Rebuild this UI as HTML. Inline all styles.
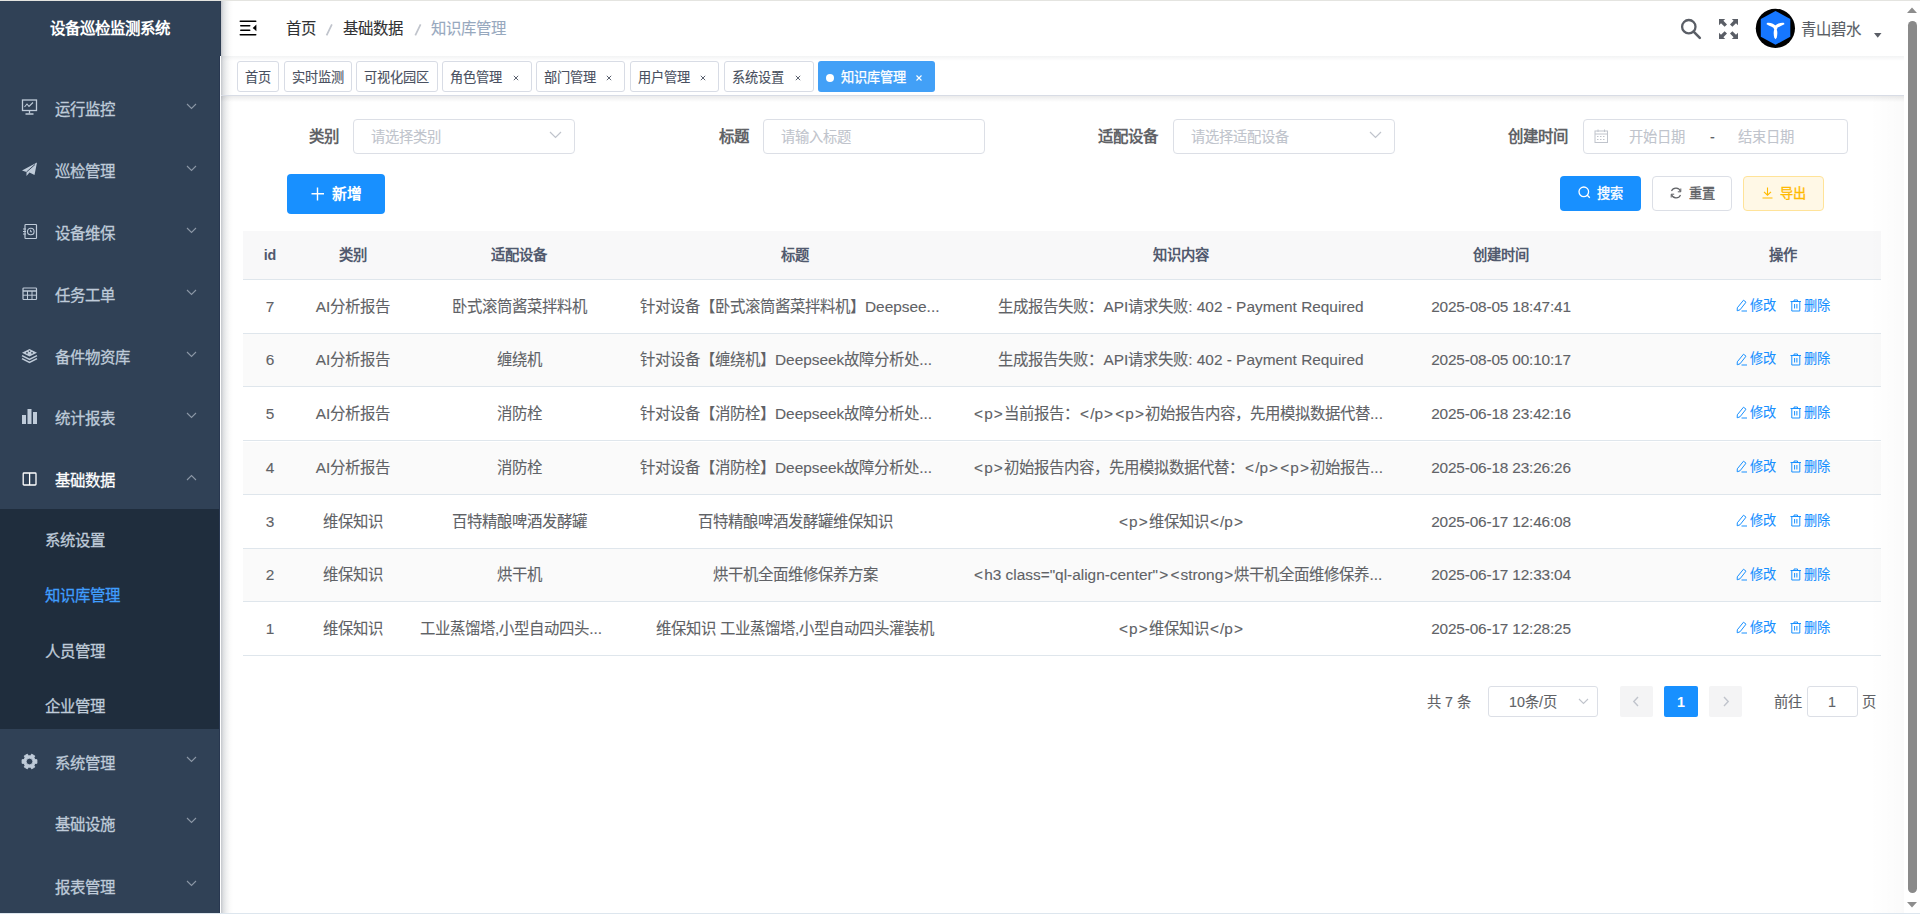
<!DOCTYPE html><html lang="zh-CN"><head><meta charset="utf-8"><style>
*{box-sizing:border-box;margin:0;padding:0}
html,body{width:1920px;height:914px;overflow:hidden;background:#fff;font-family:"Liberation Sans",sans-serif;position:relative}
.a{position:absolute;white-space:nowrap;line-height:20px}
span.a{-webkit-text-stroke-width:0.12px}
svg{display:block;position:absolute;overflow:visible}
.box{position:absolute}
</style></head><body>
<div class="box" style="left:0;top:0;width:1920px;height:1px;background:#e4e4e0"></div>
<div class="box" style="left:0;top:1px;width:220px;height:912px;background:#304156"></div>
<div class="box" style="left:0;top:509px;width:220px;height:220px;background:#1f2d3d"></div>
<div class="box" style="left:219px;top:56px;width:1px;height:857px;background:#283750"></div>
<div class="box" style="left:220px;top:1px;width:1px;height:55px;background:#2c3b50"></div>
<div class="box" style="left:221px;top:1px;width:12px;height:912px;background:linear-gradient(to right,#c4c7cc,#dfe1e3 20%,#eff0f1 45%,#fafafa 70%,rgba(255,255,255,0))"></div>
<span class="a" style="left:-190px;width:600px;text-align:center;top:18.8px;font-size:15.4px;color:#fff;font-weight:bold;-webkit-text-stroke-width:0;">设备巡检监测系统</span>
<span class="a" style="left:55px;top:100.0px;font-size:15.4px;color:#bfcbd9;font-weight:normal;-webkit-text-stroke-width:0.3px">运行监控</span>
<svg style="left:21px;top:99px" width="17" height="17" viewBox="0 0 17 17"><rect x="1.5" y="1" width="14" height="10.5" fill="none" stroke="#bfcbd9" stroke-width="1.3"/><polyline points="3.5,8 6,5 8,7.5 12,3.5" fill="none" stroke="#bfcbd9" stroke-width="1.1"/><line x1="8.5" y1="11.5" x2="8.5" y2="14.5" stroke="#bfcbd9" stroke-width="1.3"/><line x1="4.5" y1="15" x2="12.5" y2="15" stroke="#bfcbd9" stroke-width="1.5"/></svg>
<svg style="left:186px;top:103.0px" width="11" height="7" viewBox="0 0 11 7"><polyline points="1,1 5.5,5.5 10,1" fill="none" stroke="#8c97a6" stroke-width="1.1"/></svg>
<span class="a" style="left:55px;top:161.5px;font-size:15.4px;color:#bfcbd9;font-weight:normal;-webkit-text-stroke-width:0.3px">巡检管理</span>
<svg style="left:21px;top:161px" width="17" height="17" viewBox="0 0 17 17"><path d="M1 9.5 L16 1.5 L13.5 14 L8.5 11.5 L5.5 15 L5.5 11 Z" fill="#bfcbd9"/><path d="M5.5 11 L14 3.5" stroke="#304156" stroke-width="0.9"/></svg>
<svg style="left:186px;top:164.5px" width="11" height="7" viewBox="0 0 11 7"><polyline points="1,1 5.5,5.5 10,1" fill="none" stroke="#8c97a6" stroke-width="1.1"/></svg>
<span class="a" style="left:55px;top:223.5px;font-size:15.4px;color:#bfcbd9;font-weight:normal;-webkit-text-stroke-width:0.3px">设备维保</span>
<svg style="left:21px;top:223px" width="17" height="17" viewBox="0 0 17 17"><rect x="4" y="1.5" width="11.5" height="14" rx="0.8" fill="none" stroke="#bfcbd9" stroke-width="1.2"/><line x1="2" y1="6" x2="5" y2="6" stroke="#bfcbd9" stroke-width="1"/><line x1="2" y1="8.5" x2="5" y2="8.5" stroke="#bfcbd9" stroke-width="1"/><line x1="2" y1="11" x2="5" y2="11" stroke="#bfcbd9" stroke-width="1"/><circle cx="9.8" cy="8.5" r="3.3" fill="none" stroke="#bfcbd9" stroke-width="1.1"/><path d="M9.6 6.8 V8.8 H11" fill="none" stroke="#bfcbd9" stroke-width="1"/></svg>
<svg style="left:186px;top:226.5px" width="11" height="7" viewBox="0 0 11 7"><polyline points="1,1 5.5,5.5 10,1" fill="none" stroke="#8c97a6" stroke-width="1.1"/></svg>
<span class="a" style="left:55px;top:285.5px;font-size:15.4px;color:#bfcbd9;font-weight:normal;-webkit-text-stroke-width:0.3px">任务工单</span>
<svg style="left:22px;top:287px" width="16" height="14" viewBox="0 0 16 14"><rect x="1" y="1" width="13.5" height="11.5" rx="0.8" fill="none" stroke="#bfcbd9" stroke-width="1.2"/><line x1="1" y1="4" x2="14.5" y2="4" stroke="#bfcbd9" stroke-width="1.5"/><line x1="1" y1="8.2" x2="14.5" y2="8.2" stroke="#bfcbd9" stroke-width="1"/><line x1="5.5" y1="4" x2="5.5" y2="12.5" stroke="#bfcbd9" stroke-width="1"/><line x1="10" y1="4" x2="10" y2="12.5" stroke="#bfcbd9" stroke-width="1"/></svg>
<svg style="left:186px;top:288.5px" width="11" height="7" viewBox="0 0 11 7"><polyline points="1,1 5.5,5.5 10,1" fill="none" stroke="#8c97a6" stroke-width="1.1"/></svg>
<span class="a" style="left:55px;top:347.5px;font-size:15.4px;color:#bfcbd9;font-weight:normal;-webkit-text-stroke-width:0.3px">备件物资库</span>
<svg style="left:21px;top:347.5px" width="17" height="16" viewBox="0 0 17 16"><path d="M8.5 1 L16 4.8 L8.5 8.6 L1 4.8 Z" fill="#bfcbd9"/><path d="M1 7.6 L8.5 11.4 L16 7.6" fill="none" stroke="#bfcbd9" stroke-width="1.6"/><path d="M1 10.6 L8.5 14.4 L16 10.6" fill="none" stroke="#bfcbd9" stroke-width="1.6"/><circle cx="6" cy="4.8" r="0.9" fill="#304156"/><circle cx="11" cy="4.8" r="0.9" fill="#304156"/><circle cx="8.5" cy="3.2" r="0.8" fill="#304156"/></svg>
<svg style="left:186px;top:350.5px" width="11" height="7" viewBox="0 0 11 7"><polyline points="1,1 5.5,5.5 10,1" fill="none" stroke="#8c97a6" stroke-width="1.1"/></svg>
<span class="a" style="left:55px;top:408.5px;font-size:15.4px;color:#bfcbd9;font-weight:normal;-webkit-text-stroke-width:0.3px">统计报表</span>
<svg style="left:22px;top:409px" width="16" height="16" viewBox="0 0 16 16"><rect x="0" y="6" width="4" height="9" fill="#bfcbd9"/><rect x="5.5" y="0" width="4" height="15" fill="#bfcbd9"/><rect x="11" y="3" width="4" height="12" fill="#bfcbd9"/></svg>
<svg style="left:186px;top:411.5px" width="11" height="7" viewBox="0 0 11 7"><polyline points="1,1 5.5,5.5 10,1" fill="none" stroke="#8c97a6" stroke-width="1.1"/></svg>
<span class="a" style="left:55px;top:470.5px;font-size:15.4px;color:#fff;font-weight:normal;-webkit-text-stroke-width:0.3px">基础数据</span>
<svg style="left:22px;top:472px" width="15" height="14" viewBox="0 0 15 14"><rect x="1.2" y="1" width="12.8" height="12" rx="0.8" fill="none" stroke="#fff" stroke-width="1.3"/><line x1="7.6" y1="1" x2="7.6" y2="13" stroke="#fff" stroke-width="1.3"/></svg>
<svg style="left:186px;top:473.5px" width="11" height="7" viewBox="0 0 11 7"><polyline points="1,6 5.5,1.5 10,6" fill="none" stroke="#8c97a6" stroke-width="1.1"/></svg>
<span class="a" style="left:45px;top:530.5px;font-size:15.4px;color:#bfcbd9;font-weight:normal;-webkit-text-stroke-width:0.3px">系统设置</span>
<span class="a" style="left:45px;top:585.8px;font-size:15.4px;color:#409eff;font-weight:normal;-webkit-text-stroke-width:0.3px">知识库管理</span>
<span class="a" style="left:45px;top:642.0px;font-size:15.4px;color:#bfcbd9;font-weight:normal;-webkit-text-stroke-width:0.3px">人员管理</span>
<span class="a" style="left:45px;top:697.0px;font-size:15.4px;color:#bfcbd9;font-weight:normal;-webkit-text-stroke-width:0.3px">企业管理</span>
<span class="a" style="left:55px;top:753.8px;font-size:15.4px;color:#bfcbd9;font-weight:normal;-webkit-text-stroke-width:0.3px">系统管理</span>
<svg style="left:186px;top:755.8px" width="11" height="7" viewBox="0 0 11 7"><polyline points="1,1 5.5,5.5 10,1" fill="none" stroke="#8c97a6" stroke-width="1.1"/></svg>
<span class="a" style="left:55px;top:815.3px;font-size:15.4px;color:#bfcbd9;font-weight:normal;-webkit-text-stroke-width:0.3px">基础设施</span>
<svg style="left:186px;top:817.3px" width="11" height="7" viewBox="0 0 11 7"><polyline points="1,1 5.5,5.5 10,1" fill="none" stroke="#8c97a6" stroke-width="1.1"/></svg>
<span class="a" style="left:55px;top:877.5px;font-size:15.4px;color:#bfcbd9;font-weight:normal;-webkit-text-stroke-width:0.3px">报表管理</span>
<svg style="left:186px;top:879.5px" width="11" height="7" viewBox="0 0 11 7"><polyline points="1,1 5.5,5.5 10,1" fill="none" stroke="#8c97a6" stroke-width="1.1"/></svg>
<svg style="left:21px;top:753px" width="17" height="17" viewBox="0 0 17 17"><path fill="#bfcbd9" stroke="#bfcbd9" stroke-width="0.8" stroke-linejoin="round" fill-rule="evenodd" d="M14.04 10.52 L15.97 10.36 L15.97 6.64 L14.04 6.48 L13.02 4.71 L13.85 2.96 L10.62 1.10 L9.52 2.69 L7.48 2.69 L6.38 1.10 L3.15 2.96 L3.98 4.71 L2.96 6.48 L1.03 6.64 L1.03 10.36 L2.96 10.52 L3.98 12.29 L3.15 14.04 L6.38 15.90 L7.48 14.31 L9.52 14.31 L10.62 15.90 L13.85 14.04 L13.02 12.29 Z M8.5 5.2 A3.3 3.3 0 1 0 8.5 11.8 A3.3 3.3 0 1 0 8.5 5.2 Z"/></svg>
<svg style="left:239px;top:19px" width="19" height="18" viewBox="0 0 19 18"><rect x="0.5" y="1.5" width="17" height="1.6" rx="0.8"/><rect x="1" y="6" width="10.5" height="1.6" rx="0.8"/><rect x="1" y="10.5" width="10.5" height="1.6" rx="0.8"/><rect x="0.5" y="15" width="17" height="1.6" rx="0.8"/><path d="M17.4 5.6 L13.7 8.9 L17.4 12.2 Z"/></svg>
<span class="a" style="left:285.5px;top:19.3px;font-size:15.4px;color:#303133;font-weight:normal;">首页</span>
<svg style="left:0;top:0" width="1" height="1"><path d="M331.9 24.3 L326.6 35.3 M420.6 24.3 L415.3 35.3" stroke="#c0c4cc" stroke-width="1.7"/></svg>
<span class="a" style="left:342.5px;top:19.3px;font-size:15.4px;color:#303133;font-weight:normal;">基础数据</span>
<span class="a" style="left:431px;top:19.3px;font-size:15.4px;color:#97a8be;font-weight:normal;">知识库管理</span>
<svg style="left:1680px;top:18px" width="23" height="23" viewBox="0 0 23 23"><circle cx="8.8" cy="8.7" r="6.7" fill="none" stroke="#5a5e66" stroke-width="2.3"/><line x1="13.6" y1="13.6" x2="19.8" y2="19.8" stroke="#5a5e66" stroke-width="2.6" stroke-linecap="round"/></svg>
<svg style="left:1719px;top:19px" width="19" height="20" viewBox="0 0 19 20"><g fill="#5a5e66"><path d="M0 0 H6.2 L4.4 1.8 L8 5.4 L5.6 7.8 L2 4.2 L0 6.2 Z"/><path d="M19 0 H12.8 L14.6 1.8 L11 5.4 L13.4 7.8 L17 4.2 L19 6.2 Z"/><path d="M0 20 H6.2 L4.4 18.2 L8 14.6 L5.6 12.2 L2 15.8 L0 13.8 Z"/><path d="M19 20 H12.8 L14.6 18.2 L11 14.6 L13.4 12.2 L17 15.8 L19 13.8 Z"/></g></svg>
<svg style="left:1755px;top:8px" width="41" height="41" viewBox="0 0 41 41"><circle cx="20.4" cy="20.3" r="19.6" fill="#000"/><path d="M20.5 2.9 L35.3 11 L35.3 28.8 L20.5 36.8 L5.8 28.8 L5.8 11 Z" fill="#1677ff"/><g fill="#fff"><path d="M20.5 19 C18 22.5 18.6 26.5 19.3 29.8 L20.5 31.2 L21.7 29.8 C22.4 26.5 23 22.5 20.5 19 Z"/><path d="M21 20.6 C17.5 19.5 14.5 17.8 11.6 16.3 L11.9 14.9 C15.5 14.3 19 15.8 21.6 18.5 Z"/><path d="M20 20.6 C23.5 19.5 26.5 17.8 29.4 16.3 L29.1 14.9 C25.5 14.3 22 15.8 19.4 18.5 Z"/><circle cx="20.5" cy="19.8" r="2"/></g></svg>
<span class="a" style="left:1801px;top:19.7px;font-size:15.4px;color:#5a5e66;font-weight:normal;">青山碧水</span>
<svg style="left:1874px;top:33px" width="8" height="5" viewBox="0 0 8 5"><path d="M0 0 H7.5 L3.75 4.8 Z" fill="#5a5e66"/></svg>
<div class="box" style="left:221px;top:56px;width:1683px;height:5px;background:linear-gradient(rgba(0,21,41,.05),rgba(0,21,41,0))"></div>
<div class="box" style="left:221px;top:95px;width:1683px;height:1px;background:#d8dce5"></div>
<div class="box" style="left:221px;top:96px;width:1683px;height:6px;background:linear-gradient(rgba(0,0,0,.08),rgba(0,0,0,0))"></div>
<div class="box" style="left:237px;top:61px;width:42px;height:31px;border:1px solid #d8dce5;border-radius:3px;background:#fff"></div>
<span class="a" style="left:245px;top:67.5px;font-size:13.2px;color:#495060;font-weight:normal;">首页</span>
<div class="box" style="left:284px;top:61px;width:68px;height:31px;border:1px solid #d8dce5;border-radius:3px;background:#fff"></div>
<span class="a" style="left:292px;top:67.5px;font-size:13.2px;color:#495060;font-weight:normal;">实时监测</span>
<div class="box" style="left:356px;top:61px;width:82px;height:31px;border:1px solid #d8dce5;border-radius:3px;background:#fff"></div>
<span class="a" style="left:364px;top:67.5px;font-size:13.2px;color:#495060;font-weight:normal;">可视化园区</span>
<div class="box" style="left:442px;top:61px;width:90px;height:31px;border:1px solid #d8dce5;border-radius:3px;background:#fff"></div>
<span class="a" style="left:450px;top:67.5px;font-size:13.2px;color:#495060;font-weight:normal;">角色管理</span>
<svg style="left:512.5px;top:75px" width="6" height="6" viewBox="0 0 6 6"><path d="M0.8 0.8 L5.2 5.2 M5.2 0.8 L0.8 5.2" stroke="#495060" stroke-width="0.9"/></svg>
<div class="box" style="left:536px;top:61px;width:89px;height:31px;border:1px solid #d8dce5;border-radius:3px;background:#fff"></div>
<span class="a" style="left:544px;top:67.5px;font-size:13.2px;color:#495060;font-weight:normal;">部门管理</span>
<svg style="left:605.5px;top:75px" width="6" height="6" viewBox="0 0 6 6"><path d="M0.8 0.8 L5.2 5.2 M5.2 0.8 L0.8 5.2" stroke="#495060" stroke-width="0.9"/></svg>
<div class="box" style="left:630px;top:61px;width:89px;height:31px;border:1px solid #d8dce5;border-radius:3px;background:#fff"></div>
<span class="a" style="left:638px;top:67.5px;font-size:13.2px;color:#495060;font-weight:normal;">用户管理</span>
<svg style="left:699.5px;top:75px" width="6" height="6" viewBox="0 0 6 6"><path d="M0.8 0.8 L5.2 5.2 M5.2 0.8 L0.8 5.2" stroke="#495060" stroke-width="0.9"/></svg>
<div class="box" style="left:724px;top:61px;width:90px;height:31px;border:1px solid #d8dce5;border-radius:3px;background:#fff"></div>
<span class="a" style="left:732px;top:67.5px;font-size:13.2px;color:#495060;font-weight:normal;">系统设置</span>
<svg style="left:794.5px;top:75px" width="6" height="6" viewBox="0 0 6 6"><path d="M0.8 0.8 L5.2 5.2 M5.2 0.8 L0.8 5.2" stroke="#495060" stroke-width="0.9"/></svg>
<div class="box" style="left:818px;top:61px;width:117px;height:31px;background:#42a0f7;border-radius:3px"></div>
<div class="box" style="left:826px;top:73.5px;width:8px;height:8px;background:#fff;border-radius:50%"></div>
<span class="a" style="left:840.5px;top:67.5px;font-size:13.2px;color:#fff;font-weight:normal;-webkit-text-stroke-width:0.3px">知识库管理</span>
<svg style="left:915.5px;top:75px" width="6" height="6" viewBox="0 0 6 6"><path d="M0.5 0.5 L5.5 5.5 M5.5 0.5 L0.5 5.5" stroke="#fff" stroke-width="1.1"/></svg>
<span class="a" style="left:309px;top:127.0px;font-size:15.4px;color:#606266;font-weight:bold;-webkit-text-stroke-width:0;">类别</span>
<div class="box" style="left:353px;top:119px;width:222px;height:35px;border:1px solid #dcdfe6;border-radius:4px;background:#fff"></div><span class="a" style="left:371px;top:127.0px;font-size:14.3px;color:#c0c4cc;font-weight:normal;-webkit-text-stroke-width:0.1px">请选择类别</span><svg style="left:549px;top:131px" width="13" height="8" viewBox="0 0 13 8"><polyline points="1,1 6.5,6.5 12,1" fill="none" stroke="#c0c4cc" stroke-width="1.2"/></svg>
<span class="a" style="left:719px;top:127.0px;font-size:15.4px;color:#606266;font-weight:bold;-webkit-text-stroke-width:0;">标题</span>
<div class="box" style="left:763px;top:119px;width:222px;height:35px;border:1px solid #dcdfe6;border-radius:4px;background:#fff"></div><span class="a" style="left:781px;top:127.0px;font-size:14.3px;color:#c0c4cc;font-weight:normal;-webkit-text-stroke-width:0.1px">请输入标题</span>
<span class="a" style="left:1098px;top:127.0px;font-size:15.4px;color:#606266;font-weight:bold;-webkit-text-stroke-width:0;">适配设备</span>
<div class="box" style="left:1173px;top:119px;width:222px;height:35px;border:1px solid #dcdfe6;border-radius:4px;background:#fff"></div><span class="a" style="left:1191px;top:127.0px;font-size:14.3px;color:#c0c4cc;font-weight:normal;-webkit-text-stroke-width:0.1px">请选择适配设备</span><svg style="left:1369px;top:131px" width="13" height="8" viewBox="0 0 13 8"><polyline points="1,1 6.5,6.5 12,1" fill="none" stroke="#c0c4cc" stroke-width="1.2"/></svg>
<span class="a" style="left:1508px;top:127.0px;font-size:15.4px;color:#606266;font-weight:bold;-webkit-text-stroke-width:0;">创建时间</span>
<div class="box" style="left:1583px;top:119px;width:265px;height:35px;border:1px solid #dcdfe6;border-radius:4px;background:#fff"></div>
<svg style="left:1594px;top:129px" width="15" height="15" viewBox="0 0 15 15"><rect x="1" y="2" width="12.5" height="11.5" fill="none" stroke="#c0c4cc" stroke-width="1"/><line x1="1" y1="5" x2="13.5" y2="5" stroke="#c0c4cc" stroke-width="1"/><line x1="4" y1="0.5" x2="4" y2="3" stroke="#c0c4cc"/><line x1="10.5" y1="0.5" x2="10.5" y2="3" stroke="#c0c4cc"/><g fill="#c0c4cc"><rect x="3" y="7" width="1.5" height="1"/><rect x="6" y="7" width="1.5" height="1"/><rect x="9" y="7" width="1.5" height="1"/><rect x="3" y="10" width="1.5" height="1"/><rect x="6" y="10" width="1.5" height="1"/><rect x="9" y="10" width="1.5" height="1"/></g></svg>
<span class="a" style="left:1629px;top:127.0px;font-size:14.3px;color:#c0c4cc;font-weight:normal;-webkit-text-stroke-width:0.1px">开始日期</span>
<span class="a" style="left:1412.5px;width:600px;text-align:center;top:127.0px;font-size:14.3px;color:#606266;font-weight:normal;">-</span>
<span class="a" style="left:1738px;top:127.0px;font-size:14.3px;color:#c0c4cc;font-weight:normal;-webkit-text-stroke-width:0.1px">结束日期</span>
<div class="box" style="left:287px;top:174px;width:98px;height:40px;background:#1890ff;border-radius:4px"></div>
<svg style="left:311px;top:186.5px" width="14" height="14" viewBox="0 0 14 14"><path d="M6.5 0.5 V13.5 M0.5 6.8 H13" stroke="#fff" stroke-width="1.4"/></svg>
<span class="a" style="left:331.5px;top:184.0px;font-size:14.8px;color:#fff;font-weight:bold;-webkit-text-stroke-width:0;">新增</span>
<div class="box" style="left:1560px;top:176px;width:81px;height:35px;background:#1890ff;border-radius:4px"></div>
<svg style="left:1578px;top:186px" width="13" height="13" viewBox="0 0 13 13"><circle cx="5.8" cy="5.8" r="4.8" fill="none" stroke="#fff" stroke-width="1.3"/><line x1="9.3" y1="9.3" x2="11.8" y2="11.8" stroke="#fff" stroke-width="1.3"/></svg>
<span class="a" style="left:1597px;top:184.0px;font-size:13.2px;color:#fff;font-weight:normal;-webkit-text-stroke-width:0.4px">搜索</span>
<div class="box" style="left:1652px;top:176px;width:80px;height:35px;border:1px solid #dcdfe6;background:#fff;border-radius:4px"></div>
<svg style="left:1670px;top:187px" width="12" height="12" viewBox="0 0 12 12"><path d="M10.5 4.5 A4.8 4.8 0 0 0 1.5 4" fill="none" stroke="#606266" stroke-width="1.1"/><path d="M1.5 7.5 A4.8 4.8 0 0 0 10.5 8" fill="none" stroke="#606266" stroke-width="1.1"/><path d="M10.8 1.5 V4.8 H7.8" fill="none" stroke="#606266" stroke-width="1"/><path d="M1.2 10.5 V7.2 H4.2" fill="none" stroke="#606266" stroke-width="1"/></svg>
<span class="a" style="left:1689px;top:184.0px;font-size:13.2px;color:#606266;font-weight:normal;-webkit-text-stroke-width:0.35px">重置</span>
<div class="box" style="left:1743px;top:176px;width:81px;height:35px;border:1px solid #ffe399;background:#fff8e6;border-radius:4px"></div>
<svg style="left:1762px;top:187px" width="12" height="12" viewBox="0 0 12 12"><path d="M5.5 0.5 V8 M2 4.8 L5.5 8.2 L9 4.8 M0.5 11 H10.5" fill="none" stroke="#ffba00" stroke-width="1.1"/></svg>
<span class="a" style="left:1780px;top:184.0px;font-size:13.2px;color:#ffba00;font-weight:normal;-webkit-text-stroke-width:0.35px">导出</span>
<div class="box" style="left:243px;top:231px;width:1638px;height:48px;background:#f8f8f9"></div>
<div class="box" style="left:243px;top:334.2px;width:1638px;height:52.76px;background:#fafafa"></div>
<div class="box" style="left:243px;top:441.7px;width:1638px;height:52.76px;background:#fafafa"></div>
<div class="box" style="left:243px;top:549.2px;width:1638px;height:52.76px;background:#fafafa"></div>
<div class="box" style="left:243px;top:279px;width:1638px;height:1px;background:#dfe6ec"></div>
<div class="box" style="left:243px;top:333px;width:1638px;height:1px;background:#dfe6ec"></div>
<div class="box" style="left:243px;top:386px;width:1638px;height:1px;background:#dfe6ec"></div>
<div class="box" style="left:243px;top:440px;width:1638px;height:1px;background:#dfe6ec"></div>
<div class="box" style="left:243px;top:494px;width:1638px;height:1px;background:#dfe6ec"></div>
<div class="box" style="left:243px;top:548px;width:1638px;height:1px;background:#dfe6ec"></div>
<div class="box" style="left:243px;top:601px;width:1638px;height:1px;background:#dfe6ec"></div>
<div class="box" style="left:243px;top:655px;width:1638px;height:1px;background:#dfe6ec"></div>
<span class="a" style="left:-30px;width:600px;text-align:center;top:244.8px;font-size:14.3px;color:#515a6e;font-weight:bold;-webkit-text-stroke-width:0;">id</span>
<span class="a" style="left:53px;width:600px;text-align:center;top:244.8px;font-size:14.3px;color:#515a6e;font-weight:bold;-webkit-text-stroke-width:0;">类别</span>
<span class="a" style="left:219px;width:600px;text-align:center;top:244.8px;font-size:14.3px;color:#515a6e;font-weight:bold;-webkit-text-stroke-width:0;">适配设备</span>
<span class="a" style="left:495px;width:600px;text-align:center;top:244.8px;font-size:14.3px;color:#515a6e;font-weight:bold;-webkit-text-stroke-width:0;">标题</span>
<span class="a" style="left:881px;width:600px;text-align:center;top:244.8px;font-size:14.3px;color:#515a6e;font-weight:bold;-webkit-text-stroke-width:0;">知识内容</span>
<span class="a" style="left:1201px;width:600px;text-align:center;top:244.8px;font-size:14.3px;color:#515a6e;font-weight:bold;-webkit-text-stroke-width:0;">创建时间</span>
<span class="a" style="left:1483px;width:600px;text-align:center;top:244.8px;font-size:14.3px;color:#515a6e;font-weight:bold;-webkit-text-stroke-width:0;">操作</span>
<span class="a" style="left:-30px;width:600px;text-align:center;top:296.5px;font-size:15.4px;color:#606266;font-weight:normal;-webkit-text-stroke-width:0.1px;">7</span>
<span class="a" style="left:53px;width:600px;text-align:center;top:296.5px;font-size:15.4px;color:#606266;font-weight:normal;-webkit-text-stroke-width:0.1px;">AI分析报告</span>
<span class="a" style="left:219px;width:600px;text-align:center;top:296.5px;font-size:15.4px;color:#606266;font-weight:normal;-webkit-text-stroke-width:0.1px;">卧式滚筒酱菜拌料机</span>
<span class="a" style="left:640px;top:296.5px;font-size:15.4px;color:#606266;font-weight:normal;-webkit-text-stroke-width:0.1px;">针对设备【卧式滚筒酱菜拌料机】Deepsee...</span>
<span class="a" style="left:881px;width:600px;text-align:center;top:296.5px;font-size:15.4px;color:#606266;font-weight:normal;-webkit-text-stroke-width:0.1px;">生成报告失败：API请求失败: 402 - Payment Required</span>
<span class="a" style="left:1201px;width:600px;text-align:center;top:296.5px;font-size:15.4px;color:#606266;font-weight:normal;-webkit-text-stroke-width:0.1px;letter-spacing:-0.17px;">2025-08-05 18:47:41</span>
<svg style="left:1736px;top:298.7px" width="12" height="13" viewBox="0 0 12 13"><path d="M7.5 1.2 L10 3.2 L4 10.8 L1.2 11.8 L1.3 8.8 Z" fill="none" stroke="#1890ff" stroke-width="1"/><line x1="5.5" y1="12" x2="11" y2="12" stroke="#1890ff" stroke-width="1"/></svg>
<span class="a" style="left:1750px;top:295.7px;font-size:13.2px;color:#1890ff;font-weight:normal;">修改</span>
<svg style="left:1790px;top:298.7px" width="12" height="13" viewBox="0 0 12 13"><path d="M0.5 2.5 H11 M4 2.5 V1 H7.5 V2.5 M1.8 2.5 V12 H9.8 V2.5 M4.6 5 V9.5 M6.9 5 V9.5" fill="none" stroke="#1890ff" stroke-width="1"/></svg>
<span class="a" style="left:1804px;top:295.7px;font-size:13.2px;color:#1890ff;font-weight:normal;">删除</span>
<span class="a" style="left:-30px;width:600px;text-align:center;top:350.26px;font-size:15.4px;color:#606266;font-weight:normal;-webkit-text-stroke-width:0.1px;">6</span>
<span class="a" style="left:53px;width:600px;text-align:center;top:350.26px;font-size:15.4px;color:#606266;font-weight:normal;-webkit-text-stroke-width:0.1px;">AI分析报告</span>
<span class="a" style="left:219px;width:600px;text-align:center;top:350.26px;font-size:15.4px;color:#606266;font-weight:normal;-webkit-text-stroke-width:0.1px;">缠绕机</span>
<span class="a" style="left:640px;top:350.26px;font-size:15.4px;color:#606266;font-weight:normal;-webkit-text-stroke-width:0.1px;">针对设备【缠绕机】Deepseek故障分析处...</span>
<span class="a" style="left:881px;width:600px;text-align:center;top:350.26px;font-size:15.4px;color:#606266;font-weight:normal;-webkit-text-stroke-width:0.1px;">生成报告失败：API请求失败: 402 - Payment Required</span>
<span class="a" style="left:1201px;width:600px;text-align:center;top:350.26px;font-size:15.4px;color:#606266;font-weight:normal;-webkit-text-stroke-width:0.1px;letter-spacing:-0.17px;">2025-08-05 00:10:17</span>
<svg style="left:1736px;top:352.5px" width="12" height="13" viewBox="0 0 12 13"><path d="M7.5 1.2 L10 3.2 L4 10.8 L1.2 11.8 L1.3 8.8 Z" fill="none" stroke="#1890ff" stroke-width="1"/><line x1="5.5" y1="12" x2="11" y2="12" stroke="#1890ff" stroke-width="1"/></svg>
<span class="a" style="left:1750px;top:349.46px;font-size:13.2px;color:#1890ff;font-weight:normal;">修改</span>
<svg style="left:1790px;top:352.5px" width="12" height="13" viewBox="0 0 12 13"><path d="M0.5 2.5 H11 M4 2.5 V1 H7.5 V2.5 M1.8 2.5 V12 H9.8 V2.5 M4.6 5 V9.5 M6.9 5 V9.5" fill="none" stroke="#1890ff" stroke-width="1"/></svg>
<span class="a" style="left:1804px;top:349.46px;font-size:13.2px;color:#1890ff;font-weight:normal;">删除</span>
<span class="a" style="left:-30px;width:600px;text-align:center;top:404.02px;font-size:15.4px;color:#606266;font-weight:normal;-webkit-text-stroke-width:0.1px;">5</span>
<span class="a" style="left:53px;width:600px;text-align:center;top:404.02px;font-size:15.4px;color:#606266;font-weight:normal;-webkit-text-stroke-width:0.1px;">AI分析报告</span>
<span class="a" style="left:219px;width:600px;text-align:center;top:404.02px;font-size:15.4px;color:#606266;font-weight:normal;-webkit-text-stroke-width:0.1px;">消防栓</span>
<span class="a" style="left:640px;top:404.02px;font-size:15.4px;color:#606266;font-weight:normal;-webkit-text-stroke-width:0.1px;">针对设备【消防栓】Deepseek故障分析处...</span>
<span class="a" style="left:973px;top:404.02px;font-size:15.4px;color:#606266;font-weight:normal;-webkit-text-stroke-width:0.1px;"><span style="margin:0 1.1px">&lt;</span>p<span style="margin:0 1.1px">&gt;</span>当前报告：<span style="margin:0 1.1px">&lt;</span>/p<span style="margin:0 1.1px">&gt;</span><span style="margin:0 1.1px">&lt;</span>p<span style="margin:0 1.1px">&gt;</span>初始报告内容，先用模拟数据代替...</span>
<span class="a" style="left:1201px;width:600px;text-align:center;top:404.02px;font-size:15.4px;color:#606266;font-weight:normal;-webkit-text-stroke-width:0.1px;letter-spacing:-0.17px;">2025-06-18 23:42:16</span>
<svg style="left:1736px;top:406.2px" width="12" height="13" viewBox="0 0 12 13"><path d="M7.5 1.2 L10 3.2 L4 10.8 L1.2 11.8 L1.3 8.8 Z" fill="none" stroke="#1890ff" stroke-width="1"/><line x1="5.5" y1="12" x2="11" y2="12" stroke="#1890ff" stroke-width="1"/></svg>
<span class="a" style="left:1750px;top:403.21999999999997px;font-size:13.2px;color:#1890ff;font-weight:normal;">修改</span>
<svg style="left:1790px;top:406.2px" width="12" height="13" viewBox="0 0 12 13"><path d="M0.5 2.5 H11 M4 2.5 V1 H7.5 V2.5 M1.8 2.5 V12 H9.8 V2.5 M4.6 5 V9.5 M6.9 5 V9.5" fill="none" stroke="#1890ff" stroke-width="1"/></svg>
<span class="a" style="left:1804px;top:403.21999999999997px;font-size:13.2px;color:#1890ff;font-weight:normal;">删除</span>
<span class="a" style="left:-30px;width:600px;text-align:center;top:457.78px;font-size:15.4px;color:#606266;font-weight:normal;-webkit-text-stroke-width:0.1px;">4</span>
<span class="a" style="left:53px;width:600px;text-align:center;top:457.78px;font-size:15.4px;color:#606266;font-weight:normal;-webkit-text-stroke-width:0.1px;">AI分析报告</span>
<span class="a" style="left:219px;width:600px;text-align:center;top:457.78px;font-size:15.4px;color:#606266;font-weight:normal;-webkit-text-stroke-width:0.1px;">消防栓</span>
<span class="a" style="left:640px;top:457.78px;font-size:15.4px;color:#606266;font-weight:normal;-webkit-text-stroke-width:0.1px;">针对设备【消防栓】Deepseek故障分析处...</span>
<span class="a" style="left:973px;top:457.78px;font-size:15.4px;color:#606266;font-weight:normal;-webkit-text-stroke-width:0.1px;"><span style="margin:0 1.1px">&lt;</span>p<span style="margin:0 1.1px">&gt;</span>初始报告内容，先用模拟数据代替：<span style="margin:0 1.1px">&lt;</span>/p<span style="margin:0 1.1px">&gt;</span><span style="margin:0 1.1px">&lt;</span>p<span style="margin:0 1.1px">&gt;</span>初始报告...</span>
<span class="a" style="left:1201px;width:600px;text-align:center;top:457.78px;font-size:15.4px;color:#606266;font-weight:normal;-webkit-text-stroke-width:0.1px;letter-spacing:-0.17px;">2025-06-18 23:26:26</span>
<svg style="left:1736px;top:460.0px" width="12" height="13" viewBox="0 0 12 13"><path d="M7.5 1.2 L10 3.2 L4 10.8 L1.2 11.8 L1.3 8.8 Z" fill="none" stroke="#1890ff" stroke-width="1"/><line x1="5.5" y1="12" x2="11" y2="12" stroke="#1890ff" stroke-width="1"/></svg>
<span class="a" style="left:1750px;top:456.97999999999996px;font-size:13.2px;color:#1890ff;font-weight:normal;">修改</span>
<svg style="left:1790px;top:460.0px" width="12" height="13" viewBox="0 0 12 13"><path d="M0.5 2.5 H11 M4 2.5 V1 H7.5 V2.5 M1.8 2.5 V12 H9.8 V2.5 M4.6 5 V9.5 M6.9 5 V9.5" fill="none" stroke="#1890ff" stroke-width="1"/></svg>
<span class="a" style="left:1804px;top:456.97999999999996px;font-size:13.2px;color:#1890ff;font-weight:normal;">删除</span>
<span class="a" style="left:-30px;width:600px;text-align:center;top:511.53999999999996px;font-size:15.4px;color:#606266;font-weight:normal;-webkit-text-stroke-width:0.1px;">3</span>
<span class="a" style="left:53px;width:600px;text-align:center;top:511.53999999999996px;font-size:15.4px;color:#606266;font-weight:normal;-webkit-text-stroke-width:0.1px;">维保知识</span>
<span class="a" style="left:219px;width:600px;text-align:center;top:511.53999999999996px;font-size:15.4px;color:#606266;font-weight:normal;-webkit-text-stroke-width:0.1px;">百特精酿啤酒发酵罐</span>
<span class="a" style="left:495px;width:600px;text-align:center;top:511.53999999999996px;font-size:15.4px;color:#606266;font-weight:normal;-webkit-text-stroke-width:0.1px;">百特精酿啤酒发酵罐维保知识</span>
<span class="a" style="left:881px;width:600px;text-align:center;top:511.53999999999996px;font-size:15.4px;color:#606266;font-weight:normal;-webkit-text-stroke-width:0.1px;"><span style="margin:0 1.1px">&lt;</span>p<span style="margin:0 1.1px">&gt;</span>维保知识<span style="margin:0 1.1px">&lt;</span>/p<span style="margin:0 1.1px">&gt;</span></span>
<span class="a" style="left:1201px;width:600px;text-align:center;top:511.53999999999996px;font-size:15.4px;color:#606266;font-weight:normal;-webkit-text-stroke-width:0.1px;letter-spacing:-0.17px;">2025-06-17 12:46:08</span>
<svg style="left:1736px;top:513.7px" width="12" height="13" viewBox="0 0 12 13"><path d="M7.5 1.2 L10 3.2 L4 10.8 L1.2 11.8 L1.3 8.8 Z" fill="none" stroke="#1890ff" stroke-width="1"/><line x1="5.5" y1="12" x2="11" y2="12" stroke="#1890ff" stroke-width="1"/></svg>
<span class="a" style="left:1750px;top:510.74px;font-size:13.2px;color:#1890ff;font-weight:normal;">修改</span>
<svg style="left:1790px;top:513.7px" width="12" height="13" viewBox="0 0 12 13"><path d="M0.5 2.5 H11 M4 2.5 V1 H7.5 V2.5 M1.8 2.5 V12 H9.8 V2.5 M4.6 5 V9.5 M6.9 5 V9.5" fill="none" stroke="#1890ff" stroke-width="1"/></svg>
<span class="a" style="left:1804px;top:510.74px;font-size:13.2px;color:#1890ff;font-weight:normal;">删除</span>
<span class="a" style="left:-30px;width:600px;text-align:center;top:565.3000000000001px;font-size:15.4px;color:#606266;font-weight:normal;-webkit-text-stroke-width:0.1px;">2</span>
<span class="a" style="left:53px;width:600px;text-align:center;top:565.3000000000001px;font-size:15.4px;color:#606266;font-weight:normal;-webkit-text-stroke-width:0.1px;">维保知识</span>
<span class="a" style="left:219px;width:600px;text-align:center;top:565.3000000000001px;font-size:15.4px;color:#606266;font-weight:normal;-webkit-text-stroke-width:0.1px;">烘干机</span>
<span class="a" style="left:495px;width:600px;text-align:center;top:565.3000000000001px;font-size:15.4px;color:#606266;font-weight:normal;-webkit-text-stroke-width:0.1px;">烘干机全面维修保养方案</span>
<span class="a" style="left:973px;top:565.3000000000001px;font-size:15.4px;color:#606266;font-weight:normal;-webkit-text-stroke-width:0.1px;"><span style="margin:0 1.1px">&lt;</span>h3 class="ql-align-center"<span style="margin:0 1.1px">&gt;</span><span style="margin:0 1.1px">&lt;</span>strong<span style="margin:0 1.1px">&gt;</span>烘干机全面维修保养...</span>
<span class="a" style="left:1201px;width:600px;text-align:center;top:565.3000000000001px;font-size:15.4px;color:#606266;font-weight:normal;-webkit-text-stroke-width:0.1px;letter-spacing:-0.17px;">2025-06-17 12:33:04</span>
<svg style="left:1736px;top:567.5px" width="12" height="13" viewBox="0 0 12 13"><path d="M7.5 1.2 L10 3.2 L4 10.8 L1.2 11.8 L1.3 8.8 Z" fill="none" stroke="#1890ff" stroke-width="1"/><line x1="5.5" y1="12" x2="11" y2="12" stroke="#1890ff" stroke-width="1"/></svg>
<span class="a" style="left:1750px;top:564.5000000000001px;font-size:13.2px;color:#1890ff;font-weight:normal;">修改</span>
<svg style="left:1790px;top:567.5px" width="12" height="13" viewBox="0 0 12 13"><path d="M0.5 2.5 H11 M4 2.5 V1 H7.5 V2.5 M1.8 2.5 V12 H9.8 V2.5 M4.6 5 V9.5 M6.9 5 V9.5" fill="none" stroke="#1890ff" stroke-width="1"/></svg>
<span class="a" style="left:1804px;top:564.5000000000001px;font-size:13.2px;color:#1890ff;font-weight:normal;">删除</span>
<span class="a" style="left:-30px;width:600px;text-align:center;top:619.0600000000001px;font-size:15.4px;color:#606266;font-weight:normal;-webkit-text-stroke-width:0.1px;">1</span>
<span class="a" style="left:53px;width:600px;text-align:center;top:619.0600000000001px;font-size:15.4px;color:#606266;font-weight:normal;-webkit-text-stroke-width:0.1px;">维保知识</span>
<span class="a" style="left:420px;top:619.0600000000001px;font-size:15.4px;color:#606266;font-weight:normal;-webkit-text-stroke-width:0.1px;">工业蒸馏塔,小型自动四头...</span>
<span class="a" style="left:495px;width:600px;text-align:center;top:619.0600000000001px;font-size:15.4px;color:#606266;font-weight:normal;-webkit-text-stroke-width:0.1px;">维保知识 工业蒸馏塔,小型自动四头灌装机</span>
<span class="a" style="left:881px;width:600px;text-align:center;top:619.0600000000001px;font-size:15.4px;color:#606266;font-weight:normal;-webkit-text-stroke-width:0.1px;"><span style="margin:0 1.1px">&lt;</span>p<span style="margin:0 1.1px">&gt;</span>维保知识<span style="margin:0 1.1px">&lt;</span>/p<span style="margin:0 1.1px">&gt;</span></span>
<span class="a" style="left:1201px;width:600px;text-align:center;top:619.0600000000001px;font-size:15.4px;color:#606266;font-weight:normal;-webkit-text-stroke-width:0.1px;letter-spacing:-0.17px;">2025-06-17 12:28:25</span>
<svg style="left:1736px;top:621.3px" width="12" height="13" viewBox="0 0 12 13"><path d="M7.5 1.2 L10 3.2 L4 10.8 L1.2 11.8 L1.3 8.8 Z" fill="none" stroke="#1890ff" stroke-width="1"/><line x1="5.5" y1="12" x2="11" y2="12" stroke="#1890ff" stroke-width="1"/></svg>
<span class="a" style="left:1750px;top:618.2600000000001px;font-size:13.2px;color:#1890ff;font-weight:normal;">修改</span>
<svg style="left:1790px;top:621.3px" width="12" height="13" viewBox="0 0 12 13"><path d="M0.5 2.5 H11 M4 2.5 V1 H7.5 V2.5 M1.8 2.5 V12 H9.8 V2.5 M4.6 5 V9.5 M6.9 5 V9.5" fill="none" stroke="#1890ff" stroke-width="1"/></svg>
<span class="a" style="left:1804px;top:618.2600000000001px;font-size:13.2px;color:#1890ff;font-weight:normal;">删除</span>
<span class="a" style="left:1427px;top:691.5px;font-size:14.3px;color:#606266;font-weight:normal;">共 7 条</span>
<div class="box" style="left:1488px;top:686px;width:110px;height:31px;border:1px solid #dcdfe6;border-radius:3px;background:#fff"></div>
<span class="a" style="left:1509px;top:692.0px;font-size:14.3px;color:#606266;font-weight:normal;">10条/页</span>
<svg style="left:1578px;top:698px" width="11" height="7" viewBox="0 0 11 7"><polyline points="1,1 5.5,5.5 10,1" fill="none" stroke="#c0c4cc" stroke-width="1.1"/></svg>
<div class="box" style="left:1620px;top:686px;width:33px;height:31px;background:#f4f4f5;border-radius:2px"></div>
<svg style="left:1632px;top:696px" width="8" height="11" viewBox="0 0 8 11"><polyline points="6,1 1.8,5.5 6,10" fill="none" stroke="#c0c4cc" stroke-width="1.4"/></svg>
<div class="box" style="left:1664px;top:686px;width:34px;height:31px;background:#1890ff;border-radius:2px"></div>
<span class="a" style="left:1381px;width:600px;text-align:center;top:692.0px;font-size:14.3px;color:#fff;font-weight:bold;-webkit-text-stroke-width:0;">1</span>
<div class="box" style="left:1709px;top:686px;width:33px;height:31px;background:#f4f4f5;border-radius:2px"></div>
<svg style="left:1722px;top:696px" width="8" height="11" viewBox="0 0 8 11"><polyline points="2,1 6.2,5.5 2,10" fill="none" stroke="#c0c4cc" stroke-width="1.4"/></svg>
<span class="a" style="left:1774px;top:692.0px;font-size:14.3px;color:#606266;font-weight:normal;">前往</span>
<div class="box" style="left:1807px;top:686px;width:51px;height:31px;border:1px solid #dcdfe6;border-radius:3px;background:#fff"></div>
<span class="a" style="left:1532px;width:600px;text-align:center;top:692.0px;font-size:14.3px;color:#606266;font-weight:normal;">1</span>
<span class="a" style="left:1862px;top:692.0px;font-size:14.3px;color:#606266;font-weight:normal;">页</span>
<div class="box" style="left:1870px;top:96px;width:34px;height:817px;background:linear-gradient(to right,rgba(0,0,0,0),rgba(0,0,0,0.018))"></div>
<div class="box" style="left:1904px;top:1px;width:16px;height:912px;background:#fff"></div>
<svg style="left:1906px;top:6px" width="12" height="8" viewBox="0 0 12 8"><path d="M1 7 L6 1.5 L11 7 Z" fill="#8d8d8d"/></svg>
<div class="box" style="left:1908px;top:21px;width:9px;height:872px;background:#8a8a8a;border-radius:4.5px"></div>
<svg style="left:1906px;top:901px" width="12" height="8" viewBox="0 0 12 8"><path d="M1 1 L6 6.5 L11 1 Z" fill="#8d8d8d"/></svg>
<div class="box" style="left:0;top:913px;width:1920px;height:1px;background:#dde6ee"></div>
</body></html>
